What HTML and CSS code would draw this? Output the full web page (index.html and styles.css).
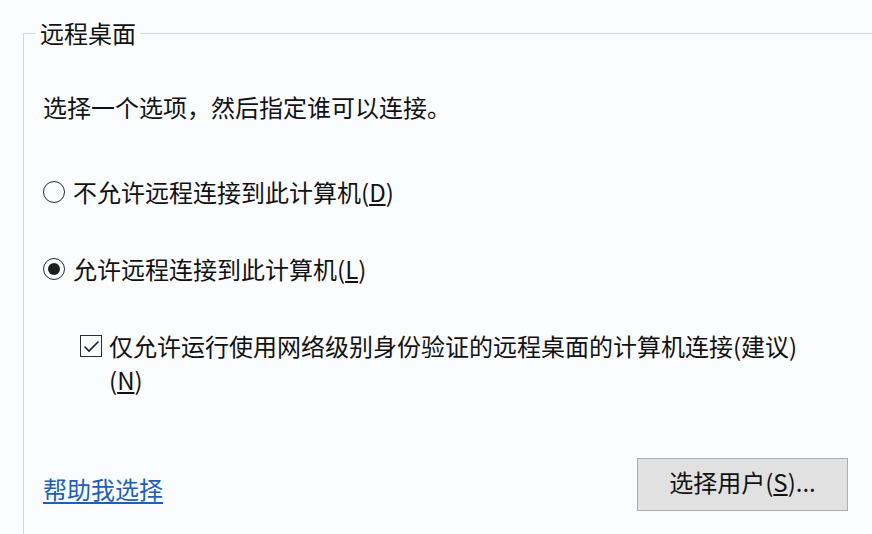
FILE: index.html
```html
<!DOCTYPE html>
<html lang="zh-CN">
<head>
  <meta charset="UTF-8">
  <title>远程桌面</title>
  <link rel="stylesheet" href="styles.css">
</head>
<body>
  <fieldset class="group">
    <legend>远程桌面</legend>
    <p class="intro">选择一个选项，然后指定谁可以连接。</p>

    <label class="option first">
      <span class="radio"></span>
      <span>不允许远程连接到此计算机(<u>D</u>)</span>
    </label>

    <label class="option">
      <span class="radio checked"></span>
      <span>允许远程连接到此计算机(<u>L</u>)</span>
    </label>

    <label class="option sub">
      <span class="check">
        <svg width="17" height="13" viewBox="0 0 17 13">
          <path d="M1.5 6.5 L6 11 L15.5 1.5" fill="none" stroke="#1c1c1c" stroke-width="1.6"/>
        </svg>
      </span>
      <span class="wrap">仅允许运行使用网络级别身份验证的远程桌面的计算机连接(建议)(<u>N</u>)</span>
    </label>

    <div class="actions">
      <a href="#" class="help">帮助我选择</a>
      <button type="button">选择用户(<u>S</u>)...</button>
    </div>
  </fieldset>
</body>
</html>
```

FILE: styles.css
```css
body {
  margin: 0;
  background: #fbfcfe;
  font-family: "Noto Sans CJK SC", "Liberation Sans", sans-serif;
  font-size: 24px;
  line-height: 34px;
  color: #111;
  overflow: hidden;
}

.group {
  margin: 16px 0 0 23px;
  padding: 40px 0 60px 19px;
  width: 900px;
  border: 1px solid #d3d7dc;
  border-right: none;
}

.group legend {
  margin-left: -7px;
  padding: 0 4px;
  line-height: 34px;
}

.intro {
  margin: 0;
}

.option {
  display: flex;
  align-items: flex-start;
  margin-top: 43px;
}

.option.first {
  margin-top: 51px;
}

.radio {
  flex: none;
  width: 20px;
  height: 20px;
  margin: 6px 8px 0 0;
  border: 1.5px solid #2b2b2b;
  border-radius: 50%;
  display: flex;
  align-items: center;
  justify-content: center;
}

.radio.checked::after {
  content: '';
  width: 12px;
  height: 12px;
  border-radius: 50%;
  background: #1e1e1e;
}

.sub {
  padding-left: 37px;
}

.check {
  flex: none;
  width: 20px;
  height: 20px;
  margin: 6px 7px 0 0;
  border: 1.5px solid #2b2b2b;
  display: flex;
  align-items: center;
  justify-content: center;
}

.wrap {
  width: 712px;
}

.actions {
  width: 805px;
  margin-top: 61px;
  display: flex;
  justify-content: space-between;
  align-items: center;
}

.help {
  color: #1c5fb8;
  text-decoration: underline;
  text-underline-offset: 3px;
  padding-top: 9px;
}

button {
  width: 211px;
  height: 53px;
  font: inherit;
  color: #111;
  background: #e1e1e1;
  border: 1px solid #adadad;
  padding: 0 0 6px;
}
```
